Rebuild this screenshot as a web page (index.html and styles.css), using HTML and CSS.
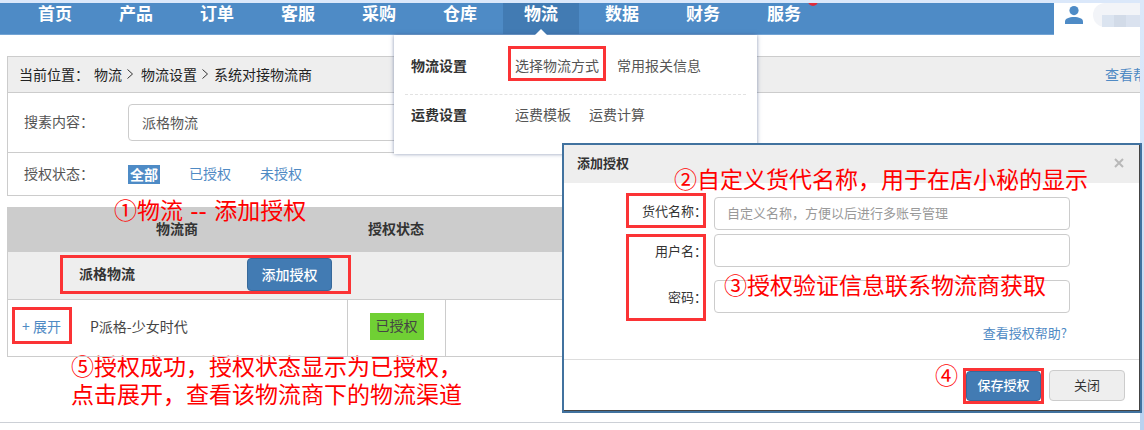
FILE: index.html
```html
<!DOCTYPE html>
<html lang="zh-CN">
<head>
<meta charset="utf-8">
<title>系统对接物流商</title>
<link rel="stylesheet" href="styles.css">
</head>
<body>
<div class="page">
  <header class="topbar">
    <nav class="nav">
      <div class="nav-item"><a href="#">首页</a></div>
      <div class="nav-item"><a href="#">产品</a></div>
      <div class="nav-item"><a href="#">订单</a></div>
      <div class="nav-item"><a href="#">客服</a></div>
      <div class="nav-item"><a href="#">采购</a></div>
      <div class="nav-item"><a href="#">仓库</a></div>
      <div class="nav-item active"><a href="#">物流</a>
        <div class="dropdown">
          <div class="menu-row">
            <strong>物流设置</strong>
            <a href="#" class="marked mark-menu">选择物流方式</a>
            <a href="#">常用报关信息</a>
          </div>
          <div class="menu-row">
            <strong>运费设置</strong>
            <a href="#">运费模板</a>
            <a href="#">运费计算</a>
          </div>
        </div>
      </div>
      <div class="nav-item"><a href="#">数据</a></div>
      <div class="nav-item"><a href="#">财务</a></div>
      <div class="nav-item"><a href="#">服务</a><span class="dot"></span></div>
    </nav>
    <div class="user">
      <svg class="user-icon" viewBox="0 0 18 18" aria-hidden="true"><circle cx="9" cy="4.600" r="4.600"/><path d="M0 18v-2.500C0 12.500 4 11 9 11s9 1.500 9 4.500V18z"/></svg>
      <span class="user-name"><i></i><i></i><i></i></span>
    </div>
  </header>

  <main class="content">
    <section class="filters">
      <div class="crumbs">
        <span>当前位置：</span><a href="#">物流</a>
        <svg class="sep" viewBox="0 0 6 10" aria-hidden="true"><path d="M.5 .5 5.500 5 .5 9.500"/></svg>
        <a href="#">物流设置</a>
        <svg class="sep" viewBox="0 0 6 10" aria-hidden="true"><path d="M.5 .5 5.500 5 .5 9.500"/></svg>
        <span>系统对接物流商</span>
        <a href="#" class="help">查看帮助</a>
      </div>
      <div class="filter-row search-row">
        <label for="search">搜素内容：</label>
        <input id="search" class="search" type="text" value="派格物流">
      </div>
      <div class="filter-row state-row">
        <span class="filter-label">授权状态：</span>
        <a href="#" class="tag">全部</a>
        <a href="#" class="state">已授权</a>
        <a href="#" class="state">未授权</a>
      </div>
    </section>

    <div class="providers">
      <table>
        <colgroup><col class="col-name"><col class="col-state"><col></colgroup>
        <thead>
          <tr><th>物流商</th><th>授权状态</th><th></th></tr>
        </thead>
        <tbody>
          <tr class="group">
            <td colspan="3">
              <div class="provider marked mark-provider"><strong>派格物流</strong><button type="button" class="btn primary add">添加授权</button></div>
            </td>
          </tr>
          <tr class="account">
            <td><div class="account-name"><a href="#" class="marked mark-expand">+ 展开</a><span>P派格-少女时代</span></div></td>
            <td class="center"><span class="badge">已授权</span></td>
            <td></td>
          </tr>
        </tbody>
      </table>
      <p class="note note-1">①物流<span class="dash"> -- </span>添加授权</p>
    </div>
    <p class="note-5">⑤授权成功，授权状态显示为已授权，<br>点击展开，查看该物流商下的物流渠道</p>
  </main>
  <footer class="bottom"></footer>
</div>

<div class="dialog" role="dialog" aria-labelledby="dialog-title">
  <div class="dialog-head">
    <h2 id="dialog-title">添加授权</h2>
    <button type="button" class="close" aria-label="关闭窗口"><svg viewBox="0 0 10 10" aria-hidden="true"><path d="M1 1 9 9M9 1 1 9"/></svg></button>
  </div>
  <form class="dialog-body">
    <div class="field"><label for="alias" class="marked mark-alias">货代名称：</label><input id="alias" type="text" placeholder="自定义名称，方便以后进行多账号管理"></div>
    <div class="credentials marked">
      <div class="field"><label for="account">用户名：</label><input id="account" type="text"></div>
      <div class="field"><label for="password">密码：</label><input id="password" type="password"></div>
    </div>
    <a href="#" class="auth-help">查看授权帮助?</a>
  </form>
  <div class="dialog-foot">
    <span class="step">④</span>
    <span class="marked mark-save"><button type="button" class="btn primary save">保存授权</button></span>
    <button type="button" class="btn plain">关闭</button>
  </div>
  <p class="note note-2">②自定义货代名称，用于在店小秘的显示</p>
  <p class="note note-3">③授权验证信息联系物流商获取</p>
</div>
</body>
</html>
```

FILE: styles.css
```css
*, *::before, *::after { box-sizing: border-box; }

body {
  margin: 0;
  min-height: 100vh;
  display: flex;
  position: relative;
  padding: 3px 4px 0 0;
  overflow: hidden;
  background: linear-gradient(#dbe8fa 0, #d6e7fb 140px, #b9d2f0 400px);
  color: #333;
  font: 14px/20px "Noto Sans CJK SC", "Noto Sans", sans-serif;
}

a { color: #4f8ac4; text-decoration: none; }
p, h2 { margin: 0; }
input, button { font: inherit; color: inherit; }

.page {
  flex: 1;
  min-width: 0;
  overflow: hidden;
  background: #fff;
}

/* Red call-out frames */
.marked { position: relative; }
.marked::after {
  content: "";
  position: absolute;
  border: 3px solid #fb3335;
  pointer-events: none;
}
.mark-menu::after { inset: -9px -7px -6px; }
.mark-provider::after { inset: -3px 0; }
.mark-expand::after { inset: -9px -11px -8px -10px; }
.mark-alias::after { inset: -4px 8px -4px auto; width: 80px; }
.credentials::after { inset: 0 auto -8px 62px; width: 80px; }
.mark-save::after { inset: -3px; }

/* Top navigation */
.topbar { display: flex; height: 32px; }
.nav {
  flex: 1;
  display: flex;
  gap: 5px;
  padding-left: 17px;
  background: #4e8bc6;
  border-bottom: 1px solid #73a4d4;
}
.nav-item {
  position: relative;
  width: 76px;
  text-align: center;
}
.nav-item > a {
  display: block;
  color: #fff;
  font-size: 17px;
  font-weight: bold;
  line-height: 20px;
}
.nav-item.active { background: #427bb3; }
.nav-item.active::after {
  content: "";
  position: absolute;
  left: 32px;
  bottom: -1px;
  z-index: 3;
  border: 6px solid transparent;
  border-top: 0;
  border-bottom-color: #fff;
}
.dot {
  position: absolute;
  top: -7px;
  right: 4px;
  width: 10px;
  height: 10px;
  border-radius: 50%;
  background: #dd2c3c;
}
.user {
  display: flex;
  justify-content: space-between;
  width: 86px;
  padding: 3px 0 0 11px;
}
.user-icon { width: 18px; height: 18px; fill: #4e8bc6; }
.user-name {
  display: flex;
  align-items: flex-end;
  width: 47px;
  height: 24px;
  margin-top: -3px;
  padding-left: 9px;
  border-radius: 12px 0 0 12px;
  background: #f2f4f8;
}
.user-name i { width: 12px; height: 12px; background: #dbe4f0; }
.user-name i:nth-child(2) { background: #d2dbe8; }
.user-name i:nth-child(3) { flex: 1; background: #dae2ef; }

/* Logistics menu */
.dropdown {
  position: absolute;
  top: 32px;
  left: -109px;
  z-index: 2;
  width: 363px;
  height: 119px;
  padding: 0 11px;
  background: #fff;
  box-shadow: 0 0 4px rgba(60, 80, 130, .6);
  text-align: left;
}
.menu-row {
  display: flex;
  gap: 18px;
  padding: 20px 6px 19px;
}
.menu-row + .menu-row { padding-top: 9px; border-top: 1px dashed #e2e2e2; }
.menu-row strong { width: 86px; }
.menu-row a { color: #555; }

/* Filters */
.content { margin: 21px -32px 0 7px; }
.filters { border: 1px solid #ccc; }
.crumbs {
  display: flex;
  align-items: center;
  height: 36px;
  padding: 0 10px 2px 11px;
  background: #eee;
  border-bottom: 1px solid #ccc;
}
.crumbs span, .crumbs a { color: #222; }
.crumbs > span:first-child { width: 75px; }
.crumbs .help { margin-left: auto; color: #4f8ac4; }
.sep {
  width: 6px;
  height: 10px;
  margin: 0 8px 0 5px;
  fill: none;
  stroke: #333;
}
.sep ~ .sep { margin-right: 6px; }
.filter-row {
  display: flex;
  align-items: center;
  padding-left: 16px;
  color: #555;
}
.filter-row label, .filter-label { width: 104px; padding-bottom: 3px; }
.search-row { height: 60px; border-bottom: 1px solid #ccc; }
.search {
  width: 500px;
  height: 37px;
  padding: 0 13px 2px;
  border: 1px solid #ccc;
  border-radius: 4px;
  color: #555;
}
.state-row { height: 42px; }
.tag {
  padding: 0 2px;
  background: #4e8bc6;
  color: #fff;
  font-weight: bold;
  line-height: 19px;
}
.state { margin-left: 29px; padding-bottom: 3px; }

/* Provider table */
.providers { position: relative; margin-top: 11px; }
table {
  width: 100%;
  table-layout: fixed;
  border-spacing: 0;
  border: 1px solid #ccc;
  border-top: 0;
}
.col-name { width: 340px; }
.col-state { width: 98px; }
th { height: 45px; padding: 0 2px 4px 0; background: #ccc; }
td { padding: 0; border-bottom: 1px solid #ccc; }
.account td { height: 56px; padding-bottom: 4px; border-bottom: 0; border-right: 1px solid #ccc; }
.group td { height: 48px; padding-bottom: 2px; background: #eee; }
.provider {
  display: flex;
  align-items: center;
  width: 291px;
  margin-left: 52px;
  padding-left: 19px;
}
.provider strong { width: 168px; padding-bottom: 3px; }
.account-name { display: flex; gap: 29px; padding-left: 14px; color: #444; }
.center { text-align: center; }
.badge {
  display: inline-block;
  padding: 3px 6px 5px;
  background: #70d034;
  color: #444;
  line-height: 19px;
}

/* Buttons */
.btn {
  padding: 0 0 2px;
  border: 1px solid #37699a;
  border-radius: 4px;
  text-align: center;
}
.primary { background: #427bb3; color: #fff; font-weight: 500; }
.add { width: 85px; height: 33px; }
.save { width: 75px; height: 30px; }
.plain { width: 76px; height: 31px; background: #eee; border-color: #ccc; }

/* Annotations */
.note, .note-5, .step { color: #f00; font-size: 23px; line-height: 28px; }
.note { position: absolute; white-space: nowrap; }
.note-1 { top: -12px; left: 107px; }
.note-2 { top: 19px; left: 110px; }
.note-3 { top: 125px; left: 160px; }
.note-5 { padding-left: 64px; margin: -6px 0 0; }
.dash { font-family: "DejaVu Sans", sans-serif; }

.bottom { margin-top: 15px; border-top: 1px solid #ccd0d6; }

/* Authorization dialog */
.dialog {
  position: absolute;
  top: 143px;
  right: 2px;
  z-index: 5;
  width: 580px;
  border: 2px solid #41729f;
  background: #fff;
  box-shadow: inset -1px -1px #444;
  font-size: 13px;
}
.dialog-head {
  display: flex;
  justify-content: space-between;
  align-items: center;
  height: 38px;
  margin-right: 1px;
  padding: 0 15px 2px 13px;
  background: #eee;
}
.dialog-head h2 { font-size: 13px; line-height: 20px; }
.close { display: flex; padding: 0; border: 0; background: none; }
.close svg { width: 10px; height: 10px; fill: none; stroke: #b8b8b8; stroke-width: 2; }
.dialog-body { display: flex; flex-direction: column; padding: 14px 70px 0 0; }
.field { display: flex; align-items: center; }
.field label { width: 150px; padding-right: 7px; text-align: right; }
.mark-alias { line-height: 27px; margin-top: -6px; }
.mark-alias + input { padding-bottom: 2px; }
.field input {
  flex: 1;
  height: 33px;
  padding: 0 12px 2px;
  border: 1px solid #ccc;
  border-radius: 4px;
}
.field input::placeholder { color: #999; }
.credentials { display: flex; flex-direction: column; gap: 13px; margin-top: 4px; }
.auth-help { align-self: flex-end; margin: 10px 3px 16px; }
.dialog-foot {
  display: flex;
  justify-content: flex-end;
  align-items: center;
  gap: 8px;
  height: 52px;
  margin-right: 1px;
  padding-right: 14px;
  border-top: 1px solid #ddd;
}
.mark-save { display: flex; }
.step { align-self: flex-start; }
```
